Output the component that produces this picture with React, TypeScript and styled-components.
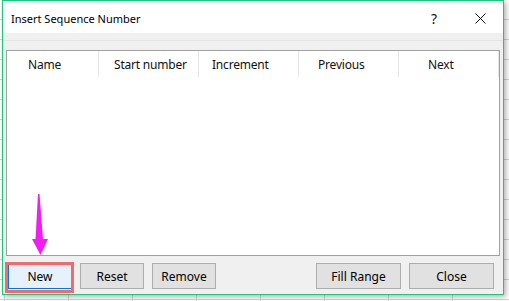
import React from 'react';
import styled, { createGlobalStyle } from 'styled-components';

const GlobalStyle = createGlobalStyle`
  html, body {
    margin: 0;
    padding: 0;
    background: #fff;
  }
  body {
    font-family: 'Noto Sans', 'Open Sans', sans-serif;
    font-size: 12px;
    color: #000;
  }
  * { box-sizing: border-box; }
`;

// spreadsheet behind the dialog
const Sheet = styled.div`
  width: 509px;
  height: 301px;
  padding-left: 2px;
  background-color: #fff;
  background-image:
    linear-gradient(to right, #d4d4d4 1px, transparent 1px),
    linear-gradient(to bottom, #d4d4d4 1px, transparent 1px);
  background-size: 64px 20px;
  background-position: 4px 19px;
  overflow: hidden;
`;

const Dialog = styled.div`
  position: relative;
  width: 502px;
  height: 295px;
  border: 1px solid #1fc57a;
  background: #f0f0f0;
  display: flex;
  flex-direction: column;
  box-shadow: 2px 2px 5px rgba(0, 0, 0, 0.3);
`;

const TitleBar = styled.div`
  height: 32px;
  background: #fff;
  display: flex;
  align-items: center;
  padding-left: 8px;
`;

const Title = styled.div`
  flex: 1;
  font-size: 11px;
  padding-top: 2px;
`;

const CaptionButton = styled.div`
  width: 46px;
  height: 32px;
  display: flex;
  align-items: center;
  justify-content: center;
  font-size: 14px;
  color: #111;
  padding-top: 2px;
`;

const Body = styled.div`
  flex: 1;
  display: flex;
  flex-direction: column;
  margin-top: 7px;
  border-top: 1px solid #e4e4e4;
  padding: 9px 3px 0;
`;

const ListBox = styled.div`
  height: 206px;
  border: 1px solid #a0a0a0;
  background: #fff;
`;

const HeaderRow = styled.div`
  display: flex;
  height: 26px;
`;

const HeaderCell = styled.div<{ $w: number; $pad: number }>`
  width: ${p => p.$w}px;
  padding-left: ${p => p.$pad}px;
  border-right: 1px solid #e5e5e5;
  display: flex;
  align-items: center;
  font-size: 12px;
  letter-spacing: -0.2px;
  color: #111;
  white-space: nowrap;
`;

const ButtonRow = styled.div`
  display: flex;
  gap: 8px;
  padding: 7px 6px 0 2px;
`;

const Spacer = styled.div`
  flex: 1;
`;

const Button = styled.div<{ $w?: number; $focused?: boolean }>`
  width: ${p => p.$w ?? 64}px;
  height: 26px;
  display: flex;
  align-items: center;
  justify-content: center;
  font-size: 12px;
  background: ${p => (p.$focused ? '#e5f1fb' : '#e1e1e1')};
  border: 1px solid ${p => (p.$focused ? '#0078d7' : '#adadad')};
  color: #000;
`;

// red annotation frame over the New button
const Highlight = styled.div`
  position: absolute;
  left: 2px;
  top: 261px;
  width: 69px;
  height: 31px;
  border: 3px solid #f26b6b;
  pointer-events: none;
`;

const Arrow = styled.svg`
  position: absolute;
  left: 0;
  top: 0;
  pointer-events: none;
`;

const columns = [
  { label: 'Name', w: 92, pad: 21 },
  { label: 'Start number', w: 100, pad: 15 },
  { label: 'Increment', w: 100, pad: 13 },
  { label: 'Previous', w: 100, pad: 19 },
  { label: 'Next', w: 100, pad: 29 },
];

function App() {
  return (
    <Sheet>
      <GlobalStyle />
      <Dialog>
        <TitleBar>
          <Title>Insert Sequence Number</Title>
          <CaptionButton>?</CaptionButton>
          <CaptionButton>
            <svg width="11" height="11" viewBox="0 0 11 11">
              <path d="M0.5 0.5 L10.5 10.5 M10.5 0.5 L0.5 10.5" stroke="#111" strokeWidth="1" />
            </svg>
          </CaptionButton>
        </TitleBar>
        <Body>
          <ListBox>
            <HeaderRow>
              {columns.map(c => (
                <HeaderCell key={c.label} $w={c.w} $pad={c.pad}>
                  {c.label}
                </HeaderCell>
              ))}
            </HeaderRow>
          </ListBox>
          <ButtonRow>
            <Button $focused>New</Button>
            <Button>Reset</Button>
            <Button>Remove</Button>
            <Spacer />
            <Button $w={85}>Fill Range</Button>
            <Button $w={85}>Close</Button>
          </ButtonRow>
        </Body>
        <Highlight />
        <Arrow width="60" height="260">
          <polygon
            points="35,193 36.5,193 40,238 45,238 37.5,254 29,238 32.5,238"
            fill="#f01ef0"
          />
        </Arrow>
      </Dialog>
    </Sheet>
  );
}

export default App;
